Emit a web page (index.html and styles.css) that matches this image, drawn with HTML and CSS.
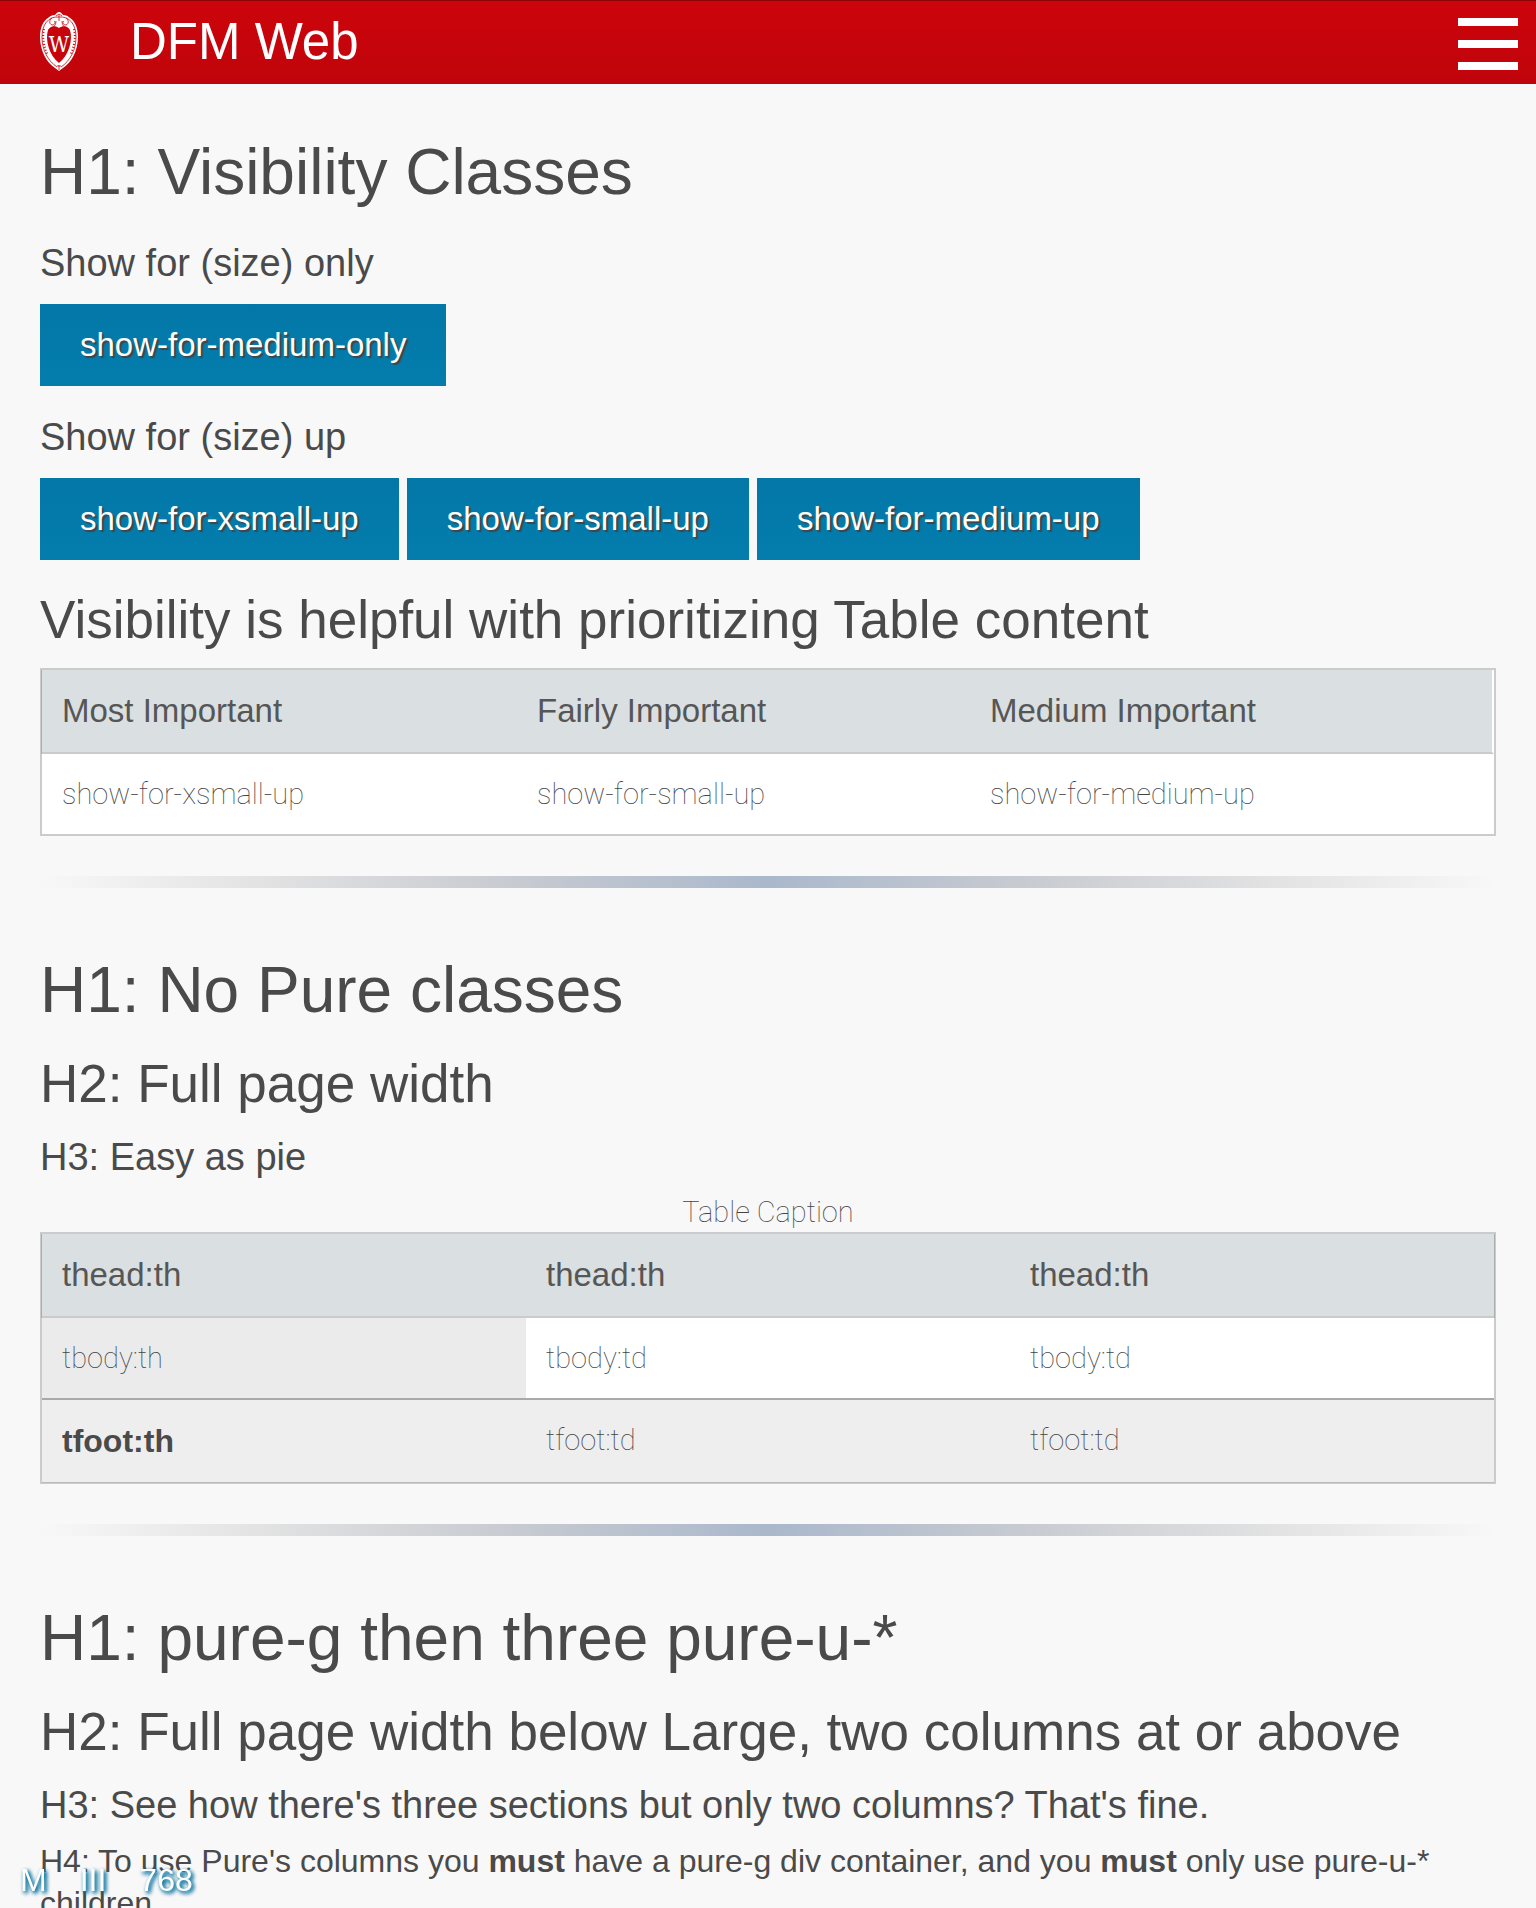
FILE: index.html
```html
<!DOCTYPE html>
<html lang="en">
<head>
<meta charset="utf-8">
<meta name="viewport" content="width=device-width, initial-scale=1">
<title>DFM Web</title>
<link rel="stylesheet" href="styles.css">
</head>
<body>
<header class="topbar">
  <a class="brand" href="#">
    <svg class="crest" viewBox="0 0 38 60" aria-hidden="true">
      <path class="crest-fill" d="M19 0c2 0 3 2 4 3 3 0 5 1 7 3 5 3 8 10 8 19 0 14-7 26-15 31l-4 3-4-3C7 51 0 39 0 25 0 16 3 9 8 6c2-2 4-3 7-3 1-1 2-3 4-3z"/>
      <path class="crest-line" d="M19 5C8 4 2 13 2 25c0 13 6 24 15 30M19 5c11-1 17 8 17 20 0 13-6 24-15 30"/>
      <path class="crest-line" d="M12 6c-3 2-3 6 0 7 3 0 4-3 2-4M26 6c3 2 3 6 0 7-3 0-4-3-2-4M19 3v6M16 9c0 4-2 6-5 7M22 9c0 4 2 6 5 7M16 4l3-2 3 2M17 54h4M19 53v5"/>
      <path class="crest-dash" d="M4 17c-2 8 0 19 4 26M34 17c2 8 0 19-4 26"/>
      <path class="crest-shield" d="M19 16c4-3 9-2 11 2 3 10-1 25-11 33C9 43 5 28 8 18c2-4 7-5 11-2z"/>
      <text class="crest-letter" x="19" y="40" text-anchor="middle">W</text>
    </svg>
    <span class="brand-name">DFM Web</span>
  </a>
  <button class="menu" type="button" aria-label="Menu"><span class="bar"></span><span class="bar"></span><span class="bar"></span></button>
</header>

<main class="content">
  <section>
    <h1 class="title">H1: Visibility Classes</h1>
    <h3 class="subheading">Show for (size) only</h3>
    <div class="buttons">
      <button class="button" type="button">show-for-medium-only</button>
    </div>
    <h3 class="subheading">Show for (size) up</h3>
    <div class="buttons">
      <button class="button" type="button">show-for-xsmall-up</button>
      <button class="button" type="button">show-for-small-up</button>
      <button class="button" type="button">show-for-medium-up</button>
    </div>
    <h2 class="heading">Visibility is helpful with prioritizing Table content</h2>
    <table class="table priority">
      <colgroup><col class="most"><col class="fairly"><col></colgroup>
      <thead><tr><th>Most Important</th><th>Fairly Important</th><th>Medium Important</th></tr></thead>
      <tbody><tr><td>show-for-xsmall-up</td><td>show-for-small-up</td><td>show-for-medium-up</td></tr></tbody>
    </table>
  </section>
  <hr class="rule">
  <section>
    <h1 class="title">H1: No Pure classes</h1>
    <h2 class="heading">H2: Full page width</h2>
    <h3 class="subheading">H3: Easy as pie</h3>
    <table class="table full">
      <caption>Table Caption</caption>
      <thead><tr><th>thead:th</th><th>thead:th</th><th>thead:th</th></tr></thead>
      <tbody><tr><th>tbody:th</th><td>tbody:td</td><td>tbody:td</td></tr></tbody>
      <tfoot><tr><th>tfoot:th</th><td>tfoot:td</td><td>tfoot:td</td></tr></tfoot>
    </table>
  </section>
  <hr class="rule">
  <section>
    <h1 class="title">H1: pure-g then three pure-u-*</h1>
    <h2 class="heading">H2: Full page width below Large, two columns at or above</h2>
    <h3 class="subheading">H3: See how there's three sections but only two columns? That's fine.</h3>
    <h4 class="note">H4: To use Pure's columns you <strong>must</strong> have a pure-g div container, and you <strong>must</strong> only use pure-u-* children.</h4>
  </section>
</main>

<div class="breakpoint"><span>M</span><span>III</span><span>768</span></div>
</body>
</html>
```
FILE: styles.css
```css
* { box-sizing: border-box; }

body {
  margin: 0;
  height: 100vh;
  overflow: hidden;
  background: #f8f8f8;
  color: #4a4a4a;
  font-family: "Liberation Sans", Arial, sans-serif;
  font-size: 33px;
  line-height: 42px;
}

.topbar {
  display: flex;
  align-items: center;
  justify-content: space-between;
  height: 84px;
  padding: 0 18px 0 40px;
  background: linear-gradient(#cd040b, #c0040b);
  box-shadow: inset 0 1px #8f0409;
}
.brand {
  display: flex;
  align-items: center;
  gap: 52px;
  color: #fff;
  text-decoration: none;
}
.brand-name { font-size: 51px; line-height: 60px; }
.crest { display: block; width: 38px; height: 60px; }
.crest-fill { fill: #fff; }
.crest-line { fill: none; stroke: #c9040b; stroke-width: 0.8; }
.crest-dash { fill: none; stroke: #c9040b; stroke-width: 2; stroke-dasharray: 1 2; }
.crest-shield { fill: #c7040b; }
.crest-letter {
  fill: #fff;
  font-family: "DejaVu Serif Condensed", "Liberation Serif", serif;
  font-size: 22px;
}
.menu {
  display: flex;
  flex-direction: column;
  gap: 14px;
  width: 60px;
  padding: 4px 0 0;
  border: 0;
  background: none;
}
.bar { height: 8px; background: #fff; }

.content { padding: 50px 40px 0; }

.title, .heading, .subheading, .note { font-weight: 400; }
.title { margin: 0 0 26px; font-size: 64px; line-height: 76px; }
.heading { margin: 26px 0 18px; font-size: 53px; line-height: 60px; }
.subheading { margin: 20px 0 12px; font-size: 38px; line-height: 46px; }
.title + .subheading { margin-top: 30px; }
.note { margin: 12px 0; font-size: 32px; }

.buttons {
  display: flex;
  flex-wrap: wrap;
  gap: 8px;
  margin: 18px 0 28px;
}
.buttons + .heading { margin-top: 30px; }
.button {
  padding: 20px 40px;
  border: 0;
  background: linear-gradient(#0378a8, #047dac);
  color: #fff;
  font: inherit;
  text-shadow: 2px 2px 1px #444;
}

.table {
  width: 100%;
  table-layout: fixed;
  border: 2px solid #cbcbcb;
  border-spacing: 0;
  background: #fff;
}
.table caption,
.table td,
.table tbody th {
  font-family: Roboto, sans-serif;
  font-size: 29px;
  font-weight: 100;
  line-height: 40px;
  color: #444;
}
.table th, .table td { padding: 20px; text-align: left; vertical-align: top; }
.table thead th {
  border-bottom: 2px solid #cbcbcb;
  background: #dadfe1;
  color: #565656;
  font-weight: 400;
}
.table thead th:first-child { box-shadow: -1px 0 #a9afb1; }
.table tbody th { background: #ebebeb; }
.table tfoot th { font-size: 32px; }
.table tfoot th, .table tfoot td {
  border-top: 2px solid #a9a9a9;
  background: #eee;
  box-shadow: 0 1px #bbb;
}
.full thead th:last-child { box-shadow: 1px 0 #a9afb1; }
.priority thead th:last-child { border-right: 2px solid #fff; }
.most { width: 475px; }
.fairly { width: 453px; }

.rule {
  height: 12px;
  margin: 40px 0 64px;
  border: 0;
  background: linear-gradient(90deg, #f8f8f8, #e4e4e4 14%, #c8cbd1 32%, #aab8cc 50%, #c8cbd1 68%, #e4e4e4 86%, #f8f8f8);
}

.breakpoint {
  position: fixed;
  left: 20px;
  bottom: 8px;
  display: flex;
  gap: 33px;
  color: #fff;
  font-size: 32px;
  line-height: 40px;
  text-shadow: 2px 2px 4px #036a96, 2px 2px 4px #0479a8;
}
```
